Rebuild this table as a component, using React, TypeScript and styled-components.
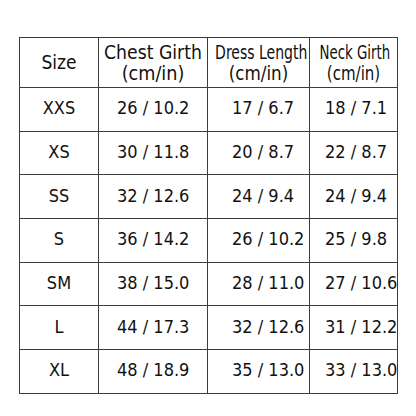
import styled, { createGlobalStyle } from "styled-components";

const GlobalStyle = createGlobalStyle`
  html, body {
    margin: 0;
    padding: 0;
    background: #ffffff;
  }
`;

type Row = { size: string; chest: string; dress: string; neck: string };

const rows: Row[] = [
  { size: "XXS", chest: "26 / 10.2", dress: "17 / 6.7", neck: "18 / 7.1" },
  { size: "XS", chest: "30 / 11.8", dress: "20 / 8.7", neck: "22 / 8.7" },
  { size: "SS", chest: "32 / 12.6", dress: "24 / 9.4", neck: "24 / 9.4" },
  { size: "S", chest: "36 / 14.2", dress: "26 / 10.2", neck: "25 / 9.8" },
  { size: "SM", chest: "38 / 15.0", dress: "28 / 11.0", neck: "27 / 10.6" },
  { size: "L", chest: "44 / 17.3", dress: "32 / 12.6", neck: "31 / 12.2" },
  { size: "XL", chest: "48 / 18.9", dress: "35 / 13.0", neck: "33 / 13.0" },
];

function App() {
  return (
    <>
      <GlobalStyle />
      <Page>
        <Chart>
          <colgroup>
            <col style={{ width: 79 }} />
            <col style={{ width: 109 }} />
            <col style={{ width: 102 }} />
            <col style={{ width: 88 }} />
          </colgroup>
          <thead>
            <HeadRow>
              <HeadCell>Size</HeadCell>
              <HeadCell>
                <Squeeze $scale={1.01}>Chest Girth</Squeeze>
                <Squeeze $scale={1.03}>(cm/in)</Squeeze>
              </HeadCell>
              <HeadCell>
                <Squeeze $scale={0.82} $shift={-2}>Dress Length</Squeeze>
                <Squeeze $scale={0.98}>(cm/in)</Squeeze>
              </HeadCell>
              <HeadCell>
                <Squeeze $scale={0.78}>Neck Girth</Squeeze>
                <Squeeze $scale={0.88}>(cm/in)</Squeeze>
              </HeadCell>
            </HeadRow>
          </thead>
          <tbody>
            {rows.map((r) => (
              <BodyRow key={r.size}>
                <SizeCell>{r.size}</SizeCell>
                <ValueCell $indent={18}>{r.chest}</ValueCell>
                <ValueCell $indent={24}>{r.dress}</ValueCell>
                <ValueCell $indent={15}>{r.neck}</ValueCell>
              </BodyRow>
            ))}
          </tbody>
        </Chart>
      </Page>
    </>
  );
}

const Page = styled.div`
  padding: 37px 0 0 19px;
  font-family: "DejaVu Sans", "Liberation Sans", sans-serif;
  font-stretch: condensed;
  color: #111111;
`;

const Chart = styled.table`
  border-collapse: collapse;
  table-layout: fixed;
  width: 378px;
  border: 1.5px solid #3c3c3c;

  td,
  th {
    border: 1.5px solid #3c3c3c;
    padding: 0;
  }
`;

const HeadRow = styled.tr`
  height: 50px;
`;

const HeadCell = styled.th`
  font-weight: normal;
  font-size: 19px;
  line-height: 21px;
  text-align: center;
  vertical-align: middle;
  white-space: nowrap;
  overflow: visible;
`;

const Squeeze = styled.span<{ $scale: number; $shift?: number }>`
  display: block;
  transform: translateX(${(p) => p.$shift ?? 0}px) scaleX(${(p) => p.$scale});
  transform-origin: center;
`;

const BodyRow = styled.tr`
  height: 43.7px;
`;

const SizeCell = styled.td`
  font-size: 18px;
  text-align: center;
  vertical-align: middle;
  padding-bottom: 3px !important;
`;

const ValueCell = styled.td<{ $indent: number }>`
  font-size: 18px;
  text-align: left;
  vertical-align: middle;
  white-space: nowrap;
  overflow: visible;
  padding-left: ${(p) => p.$indent}px !important;
  padding-bottom: 3px !important;
`;

export default App;
